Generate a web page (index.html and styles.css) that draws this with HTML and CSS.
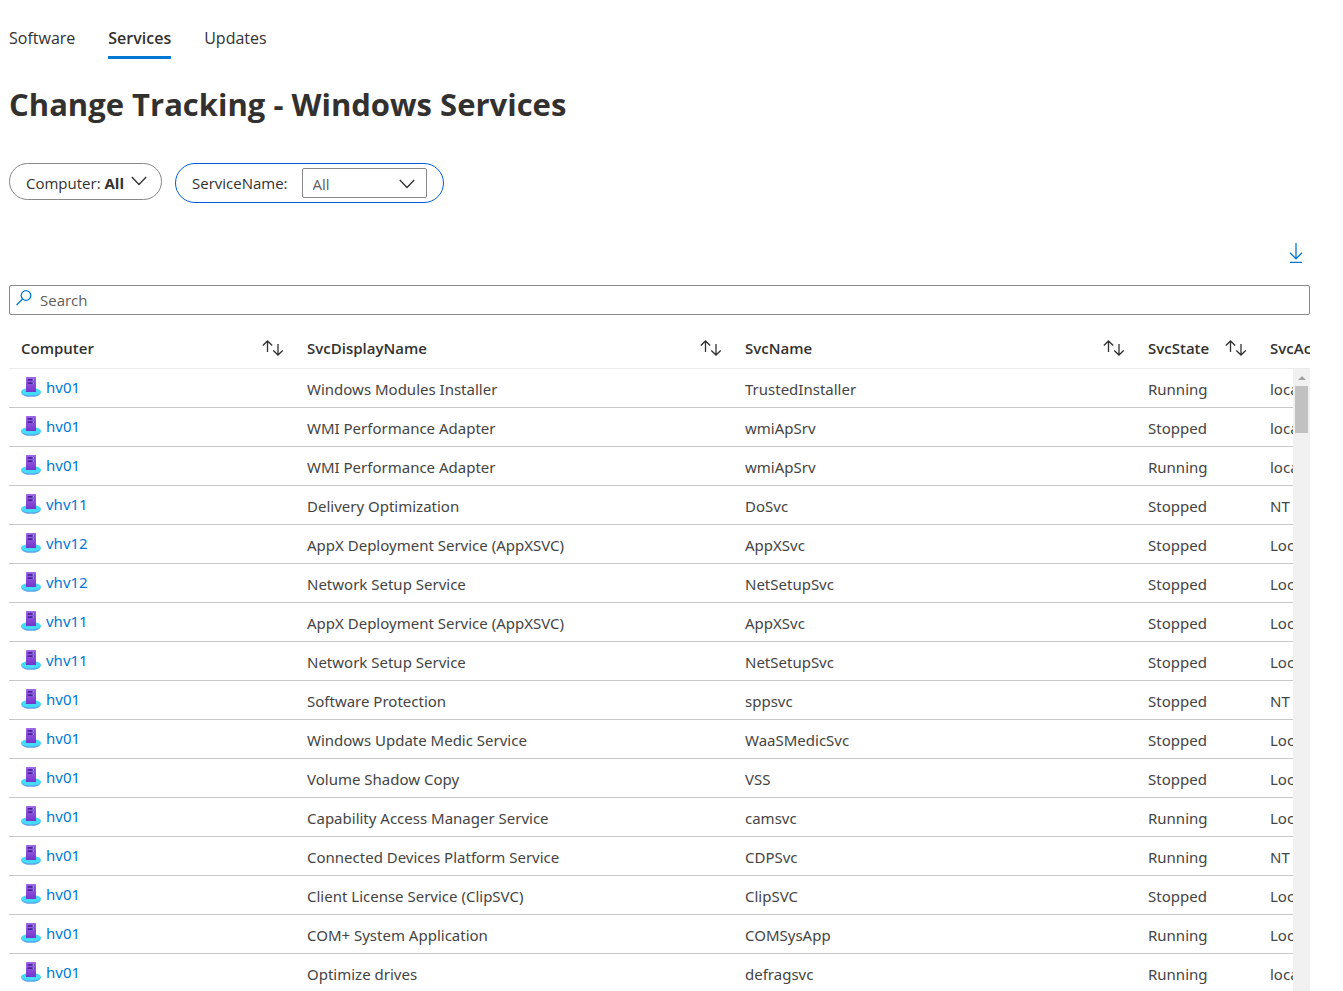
FILE: index.html
```html
<!DOCTYPE html>
<html lang="en">
<head>
<meta charset="utf-8">
<title>Change Tracking - Windows Services</title>
<link rel="stylesheet" href="styles.css">
</head>
<body>
<svg class="defs" aria-hidden="true">
  <defs>
    <linearGradient id="tower" x1="0" y1="0" x2="0" y2="1"><stop offset="0" stop-color="#a067ea"/><stop offset="1" stop-color="#7434cb"/></linearGradient>
    <symbol id="server" viewBox="0 0 20 20">
      <ellipse cx="10" cy="15.800" rx="9.800" ry="4" fill="#5a9fee"/>
      <ellipse cx="10" cy="14.800" rx="10" ry="3.800" fill="#45dcfa"/>
      <rect x="5" y="0" width="10" height="15" rx="0.500" fill="url(#tower)"/>
      <rect x="6.500" y="2" width="7" height="1.800" rx="0.900" fill="#4a2397"/>
      <rect x="6.500" y="5.200" width="7" height="1.800" rx="0.900" fill="#4a2397"/>
      <circle cx="12.300" cy="2.900" r="0.800" fill="#7fc6f4"/>
      <circle cx="12.300" cy="6.100" r="0.800" fill="#7fc6f4"/>
    </symbol>
    <symbol id="sort" viewBox="0 0 22 16"><path d="M5.500 12V1M0.800 5.500L5.500 1l4.700 4.500M16 4v11M11.300 10.500L16 15l4.700-4.500"/></symbol>
    <symbol id="chevron" viewBox="0 0 16 10"><path d="M0.800 1L8 8.500 15.200 1"/></symbol>
  </defs>
</svg>
<nav class="tabs">
  <a class="tab" href="#software">Software</a>
  <a class="tab tab-active" href="#services" aria-current="page">Services</a>
  <a class="tab" href="#updates">Updates</a>
</nav>
<main class="page">
  <h1 class="title">Change Tracking - Windows Services</h1>
  <div class="filters">
    <button class="pill" type="button"><span>Computer: <b>All</b></span><svg class="chevron"><use href="#chevron"/></svg></button>
    <div class="pill pill-open">
      <label for="service">ServiceName:</label>
      <span class="select-box">
        <select id="service" class="select"><option>All</option></select>
        <svg class="chevron select-chevron"><use href="#chevron"/></svg>
      </span>
    </div>
  </div>
  <div class="toolbar">
    <button class="icon-button" type="button" aria-label="Download"><svg class="download" viewBox="0 0 14 20"><path d="M7 0v15.500M1 9.800l6 6 6-6M1 19.300h12"/></svg></button>
  </div>
  <label class="search">
    <svg class="search-icon" viewBox="0 0 16 16"><circle cx="10" cy="5.500" r="4.800"/><path d="M6.500 9L0.500 15"/></svg>
    <input class="search-input" type="search" placeholder="Search" aria-label="Search">
  </label>
  <div class="grid">
    <table class="table">
      <colgroup><col class="col-computer"><col class="col-display"><col class="col-name"><col class="col-state"><col class="col-account"></colgroup>
      <thead>
        <tr>
          <th><div class="head">Computer<button class="icon-button" type="button" aria-label="Sort"><svg class="sort"><use href="#sort"/></svg></button></div></th>
          <th><div class="head">SvcDisplayName<button class="icon-button" type="button" aria-label="Sort"><svg class="sort"><use href="#sort"/></svg></button></div></th>
          <th><div class="head">SvcName<button class="icon-button" type="button" aria-label="Sort"><svg class="sort"><use href="#sort"/></svg></button></div></th>
          <th><div class="head">SvcState<button class="icon-button" type="button" aria-label="Sort"><svg class="sort"><use href="#sort"/></svg></button></div></th>
          <th><div class="head">SvcAccount</div></th>
        </tr>
      </thead>
      <tbody id="rows"></tbody>
    </table>
    <div class="scrollbar" aria-hidden="true"><svg class="scroll-arrow" viewBox="0 0 8 4"><path d="M0 4l4-4 4 4z"/></svg><div class="thumb"></div></div>
  </div>
</main>
<script src="rows.js"></script>
</body>
</html>
```

FILE: rows.js
```js
const rows = [
  ["hv01", "Windows Modules Installer", "TrustedInstaller", "Running", "localSystem"],
  ["hv01", "WMI Performance Adapter", "wmiApSrv", "Stopped", "localSystem"],
  ["hv01", "WMI Performance Adapter", "wmiApSrv", "Running", "localSystem"],
  ["vhv11", "Delivery Optimization", "DoSvc", "Stopped", "NT Authority\\NetworkService"],
  ["vhv12", "AppX Deployment Service (AppXSVC)", "AppXSvc", "Stopped", "LocalSystem"],
  ["vhv12", "Network Setup Service", "NetSetupSvc", "Stopped", "LocalSystem"],
  ["vhv11", "AppX Deployment Service (AppXSVC)", "AppXSvc", "Stopped", "LocalSystem"],
  ["vhv11", "Network Setup Service", "NetSetupSvc", "Stopped", "LocalSystem"],
  ["hv01", "Software Protection", "sppsvc", "Stopped", "NT AUTHORITY\\NetworkService"],
  ["hv01", "Windows Update Medic Service", "WaaSMedicSvc", "Stopped", "LocalSystem"],
  ["hv01", "Volume Shadow Copy", "VSS", "Stopped", "LocalSystem"],
  ["hv01", "Capability Access Manager Service", "camsvc", "Running", "LocalSystem"],
  ["hv01", "Connected Devices Platform Service", "CDPSvc", "Running", "NT AUTHORITY\\LocalService"],
  ["hv01", "Client License Service (ClipSVC)", "ClipSVC", "Stopped", "LocalSystem"],
  ["hv01", "COM+ System Application", "COMSysApp", "Running", "LocalSystem"],
  ["hv01", "Optimize drives", "defragsvc", "Running", "localSystem"]
];
document.getElementById("rows").innerHTML = rows.map(([computer, ...cells]) =>
  `<tr><td><a class="computer" href="#${computer}"><svg class="server"><use href="#server"/></svg>${computer}</a></td>` +
  cells.map(text => `<td>${text}</td>`).join("") + "</tr>").join("");
```

FILE: styles.css
```css
* { box-sizing: border-box; }
body {
  margin: 0;
  height: 100vh;
  overflow: hidden;
  display: flex;
  flex-direction: column;
  padding: 20px 33px 0 9px;
  background: #fff;
  color: #323130;
  font-family: "Open Sans", "Noto Sans", sans-serif;
  font-size: 15px;
  line-height: 20px;
}
button, input, select { font: inherit; color: inherit; }
svg { fill: none; stroke: #323130; stroke-width: 1.3; flex: none; display: block; }
.defs { position: absolute; width: 0; height: 0; }

.tabs { display: flex; gap: 33px; }
.tab { height: 39px; line-height: 36px; font-size: 16px; color: #323130; text-decoration: none; }
.tab-active { font-weight: 600; border-bottom: 3px solid #0078d4; }

.page { flex: 1; min-height: 0; display: flex; flex-direction: column; }
.title { margin: 21px 0 0; font-size: 31px; line-height: 48px; font-weight: 700; }

.filters { display: flex; align-items: flex-start; gap: 13px; margin-top: 35px; }
.pill {
  display: flex;
  align-items: center;
  gap: 7px;
  height: 37px;
  padding: 3px 14px 0 16px;
  border: 1px solid #8a8886;
  border-radius: 20px;
  background: #fff;
}
.chevron { width: 16px; height: 10px; margin-top: -4px; }
.pill-open { height: 40px; gap: 14px; padding: 0 16px; border-color: #015cda; }
.select-box { position: relative; }
.select {
  display: block;
  appearance: none;
  width: 125px;
  height: 30px;
  padding: 2px 32px 0 10px;
  border: 1px solid #8a8886;
  border-radius: 2px;
  background: #fff;
  color: #605e5c;
}
.select-chevron { position: absolute; right: 12px; top: 15px; pointer-events: none; }

.toolbar { display: flex; justify-content: flex-end; margin-top: 40px; padding-right: 7px; }
.icon-button { padding: 0; border: 0; background: none; }
.download { width: 14px; height: 20px; stroke: #0078d4; }

.search {
  display: flex;
  align-items: center;
  gap: 8px;
  flex: none;
  height: 30px;
  margin-top: 22px;
  padding: 0 6px;
  border: 1px solid #8a8886;
  border-radius: 2px;
}
.search-icon { width: 16px; height: 16px; margin-bottom: 5px; stroke: #0078d4; }
.search-input { flex: 1; height: 28px; padding: 0; border: 0; outline: 0; background: none; }
.search-input::placeholder { color: #605e5c; opacity: 1; }

.grid { position: relative; flex: 1; min-height: 0; margin-top: 14px; overflow: hidden; }
.table { width: 100%; min-width: 1449px; table-layout: fixed; border-collapse: separate; border-spacing: 0; font-family: "Noto Sans", "Open Sans", sans-serif; }
.col-computer { width: 286px; }
.col-display { width: 438px; }
.col-name { width: 403px; }
.col-state { width: 122px; }
.table th { height: 40px; padding: 0 11px 2px 12px; text-align: left; font-weight: 600; border-bottom: 1px solid #edebe9; }
.head { display: flex; align-items: center; justify-content: space-between; font-family: "Open Sans", "Noto Sans", sans-serif; }
.sort { width: 22px; height: 16px; }
.table td { height: 39px; padding: 1px 12px 0; white-space: nowrap; color: #444; border-bottom: 1px solid #c8c8c8; }
.computer { display: flex; gap: 5px; height: 24px; color: #0078d4; text-decoration: none; }
.server { width: 20px; height: 20px; stroke: none; }

.scrollbar { position: absolute; top: 40px; right: 0; bottom: 0; width: 17px; padding: 7px 2px 0; background: #f1f1f1; }
.scroll-arrow { width: 8px; height: 4px; margin: 0 auto 6px; fill: #a3a3a3; stroke: none; }
.thumb { height: 47px; background: #c1c1c1; }
```
